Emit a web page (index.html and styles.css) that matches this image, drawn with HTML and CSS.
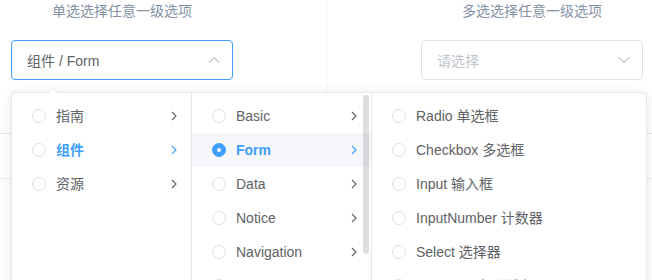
FILE: index.html
```html
<!DOCTYPE html>
<html lang="zh">
<head>
<meta charset="utf-8">
<link rel="stylesheet" href="styles.css">
</head>
<body>
<div class="page">
  <div class="demo">
    <div class="block block-left">
      <div class="col">
        <span class="demonstration">单选选择任意一级选项</span>
        <div class="input is-focus">
          <span class="value">组件 / Form</span>
          <svg class="caret" width="12" height="8" viewBox="0 0 12 8"><polyline points="1,6.5 6,1.5 11,6.5" fill="none" stroke="#c0c4cc" stroke-width="1.2"/></svg>
        </div>
      </div>
    </div>
    <div class="block block-right">
      <div class="col">
        <span class="demonstration">多选选择任意一级选项</span>
        <div class="input">
          <span class="placeholder">请选择</span>
          <svg class="caret" width="12" height="8" viewBox="0 0 12 8"><polyline points="1,1.5 6,6.5 11,1.5" fill="none" stroke="#c0c4cc" stroke-width="1.2"/></svg>
        </div>
      </div>
    </div>
  </div>
  <div class="table"></div>

  <div class="dropdown">
    <span class="popper-arrow"></span>
    <div class="panel">
      <div class="menu">
        <div class="node"><span class="radio"></span><span class="label">指南</span><svg class="postfix" width="6" height="10" viewBox="0 0 6 10"><polyline points="1,1 5,5 1,9" fill="none" stroke="currentColor" stroke-width="1.1"/></svg></div>
        <div class="node in-path"><span class="radio"></span><span class="label">组件</span><svg class="postfix" width="6" height="10" viewBox="0 0 6 10"><polyline points="1,1 5,5 1,9" fill="none" stroke="currentColor" stroke-width="1.1"/></svg></div>
        <div class="node"><span class="radio"></span><span class="label">资源</span><svg class="postfix" width="6" height="10" viewBox="0 0 6 10"><polyline points="1,1 5,5 1,9" fill="none" stroke="currentColor" stroke-width="1.1"/></svg></div>
      </div>
      <div class="menu">
        <div class="node"><span class="radio"></span><span class="label">Basic</span><svg class="postfix" width="6" height="10" viewBox="0 0 6 10"><polyline points="1,1 5,5 1,9" fill="none" stroke="currentColor" stroke-width="1.1"/></svg></div>
        <div class="node in-path focus"><span class="radio checked"></span><span class="label">Form</span><svg class="postfix" width="6" height="10" viewBox="0 0 6 10"><polyline points="1,1 5,5 1,9" fill="none" stroke="currentColor" stroke-width="1.1"/></svg></div>
        <div class="node"><span class="radio"></span><span class="label">Data</span><svg class="postfix" width="6" height="10" viewBox="0 0 6 10"><polyline points="1,1 5,5 1,9" fill="none" stroke="currentColor" stroke-width="1.1"/></svg></div>
        <div class="node"><span class="radio"></span><span class="label">Notice</span><svg class="postfix" width="6" height="10" viewBox="0 0 6 10"><polyline points="1,1 5,5 1,9" fill="none" stroke="currentColor" stroke-width="1.1"/></svg></div>
        <div class="node"><span class="radio"></span><span class="label">Navigation</span><svg class="postfix" width="6" height="10" viewBox="0 0 6 10"><polyline points="1,1 5,5 1,9" fill="none" stroke="currentColor" stroke-width="1.1"/></svg></div>
        <div class="node"><span class="radio"></span><span class="label">Others</span><svg class="postfix" width="6" height="10" viewBox="0 0 6 10"><polyline points="1,1 5,5 1,9" fill="none" stroke="currentColor" stroke-width="1.1"/></svg></div>
        <span class="thumb"></span>
      </div>
      <div class="menu menu-last">
        <div class="node"><span class="radio"></span><span class="label">Radio 单选框</span></div>
        <div class="node"><span class="radio"></span><span class="label">Checkbox 多选框</span></div>
        <div class="node"><span class="radio"></span><span class="label">Input 输入框</span></div>
        <div class="node"><span class="radio"></span><span class="label">InputNumber 计数器</span></div>
        <div class="node"><span class="radio"></span><span class="label">Select 选择器</span></div>
        <div class="node"><span class="radio"></span><span class="label">Cascader 级联选择器</span></div>
      </div>
    </div>
  </div>
</div>
</body>
</html>
```

FILE: styles.css
```css
html, body {
  margin: 0;
  padding: 0;
  overflow: hidden;
  background: #fff;
}
body {
  font-family: "Liberation Sans", Arial, "Noto Sans CJK SC", sans-serif;
  font-size: 14px;
  color: #606266;
}
.page {
  position: relative;
  width: 652px;
  height: 280px;
  overflow: hidden;
}
.demo {
  display: flex;
}
.block {
  box-sizing: border-box;
  padding-bottom: 53px;
}
.block-left {
  width: 327px;
  padding-left: 11px;
  border-right: 1px solid #eff2f6;
}
.block-right {
  width: 325px;
  padding-left: 94px;
}
.col {
  width: 222px;
  display: flex;
  flex-direction: column;
}
.demonstration {
  display: block;
  text-align: center;
  color: #8492a6;
  line-height: 22px;
  margin-bottom: 18px;
}
.input {
  box-sizing: border-box;
  height: 40px;
  border: 1px solid #dcdfe6;
  border-radius: 4px;
  display: flex;
  align-items: center;
  padding: 0 12px 0 15px;
  justify-content: space-between;
}
.input.is-focus {
  border-color: #409eff;
}
.value { color: #606266; }
.placeholder { color: #c0c4cc; }
.caret { display: block; }
.table {
  height: 44px;
  border-top: 1px solid #e2e8f6;
  border-bottom: 1px solid #ebeef5;
}

.dropdown {
  position: absolute;
  left: 11px;
  top: 92px;
  border: 1px solid #e4e7ed;
  border-radius: 4px;
  background: #fff;
  box-shadow: 0 2px 12px 0 rgba(0, 0, 0, 0.1);
}
.popper-arrow {
  position: absolute;
  left: 35px;
  top: -6px;
  width: 0;
  height: 0;
  border-left: 6px solid transparent;
  border-right: 6px solid transparent;
  border-bottom: 6px solid #e4e7ed;
}
.popper-arrow::after {
  content: "";
  position: absolute;
  left: -6px;
  top: 1px;
  border-left: 6px solid transparent;
  border-right: 6px solid transparent;
  border-bottom: 6px solid #fff;
}
.panel {
  display: flex;
  border-radius: 4px;
  overflow: hidden;
}
.menu {
  position: relative;
  box-sizing: border-box;
  width: 180px;
  height: 204px;
  padding: 6px 0;
  border-right: 1px solid #e4e7ed;
  overflow: hidden;
}
.menu-last {
  width: 274px;
  border-right: none;
}
.node {
  position: relative;
  display: flex;
  align-items: center;
  height: 34px;
  line-height: 34px;
  padding: 0 30px 0 20px;
  color: #606266;
}
.node.focus {
  background: #f5f7fa;
}
.node.in-path {
  color: #409eff;
  font-weight: bold;
}
.radio {
  box-sizing: border-box;
  width: 14px;
  height: 14px;
  border: 1px solid #dcdfe6;
  border-radius: 50%;
  background: #fff;
  flex: none;
  position: relative;
}
.radio.checked {
  background: #409eff;
  border-color: #409eff;
}
.radio.checked::after {
  content: "";
  position: absolute;
  left: 4px;
  top: 4px;
  width: 4px;
  height: 4px;
  border-radius: 50%;
  background: #fff;
}
.label {
  padding: 0 10px;
  white-space: nowrap;
}
.postfix {
  position: absolute;
  right: 14px;
  top: 12px;
  color: #606266;
}
.node.in-path .postfix {
  color: #409eff;
}
.thumb {
  position: absolute;
  right: 2px;
  top: 2px;
  width: 6px;
  height: 159px;
  border-radius: 6px;
  background: rgba(144, 147, 153, 0.3);
}
```
